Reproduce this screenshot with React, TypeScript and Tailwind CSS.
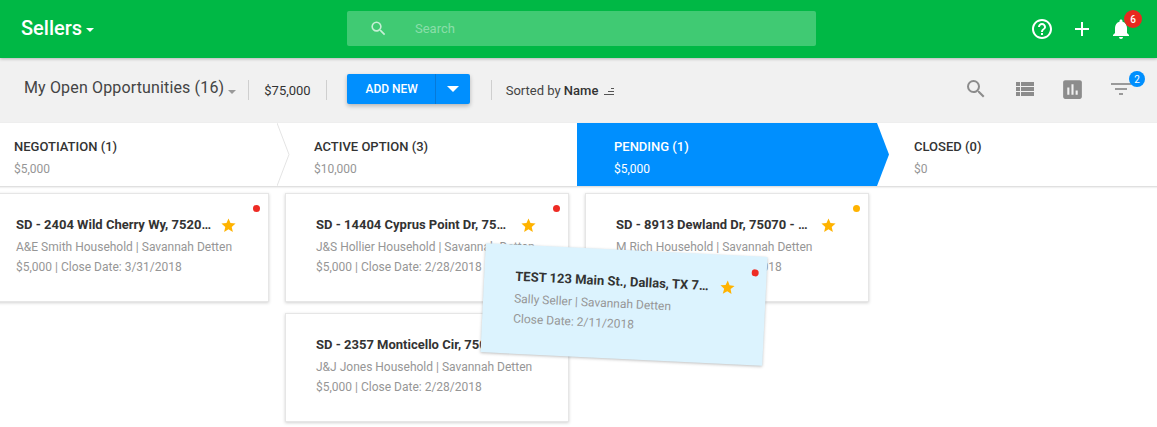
import React from 'react';
import { MdAdd, MdAssessment, MdHelpOutline, MdNotifications, MdSearch, MdStar, MdViewList } from 'react-icons/md';

type Deal = { title: string; line1: string; line2: string; dot: string };

const stages = [
  { name: 'NEGOTIATION (1)', total: '$5,000' },
  { name: 'ACTIVE OPTION (3)', total: '$10,000' },
  { name: 'PENDING (1)', total: '$5,000', active: true },
  { name: 'CLOSED (0)', total: '$0' },
];

const columns: Deal[][] = [
  [{ title: 'SD - 2404 Wild Cherry Wy, 75205 - Sale', line1: 'A&E Smith Household | Savannah Detten', line2: '$5,000 | Close Date: 3/31/2018', dot: 'bg-[#ee2b24]' }],
  [
    { title: 'SD - 14404 Cyprus Point Dr, 75254 - Sale', line1: 'J&S Hollier Household | Savannah Detten', line2: '$5,000 | Close Date: 2/28/2018', dot: 'bg-[#ee2b24]' },
    { title: 'SD - 2357 Monticello Cir, 75070 - Sale', line1: 'J&J Jones Household | Savannah Detten', line2: '$5,000 | Close Date: 2/28/2018', dot: 'bg-[#ee2b24]' },
  ],
  [{ title: 'SD - 8913 Dewland Dr, 75070 - Sale of home', line1: 'M Rich Household | Savannah Detten', line2: '$5,000 | Close Date: 2/28/2018', dot: 'bg-[#ffb300]' }],
];

const Caret = ({ className }: { className: string }) => (
  <span className={`inline-block h-0 w-0 border-x-[4px] border-t-[4px] border-x-transparent ${className}`} />
);

const Separator = () => <div className="mt-[-1px] h-[20px] w-px bg-[#cfcfcf]" />;

const DealCard = ({ deal, dragging }: { deal: Deal; dragging?: boolean }) => (
  <div
    className={
      dragging
        ? 'absolute left-[483px] top-[250px] h-[109px] w-[282px] rotate-[2.8deg] bg-[#dcf3fe] pl-[31px] pt-[23px] shadow-[0_1px_3px_rgba(0,0,0,0.25)]'
        : 'relative h-[109px] w-[284px] border border-[#e6e6e6] bg-white pl-[30px] pt-[22px] shadow-[0_1px_3px_rgba(0,0,0,0.18)]'
    }
  >
    <span className={`absolute right-[8px] h-[7px] w-[7px] rounded-full ${dragging ? 'top-[13px]' : 'top-[11px]'} ${deal.dot}`} />
    <div className="flex items-center">
      <div className="w-[196px] truncate text-[13px] font-bold leading-[18px] text-[#333333]">{deal.title}</div>
      <MdStar size={17} className="ml-[8px] text-[#ffb300]" />
    </div>
    <div className="mt-[3px] whitespace-nowrap text-[12px] leading-[20px] text-[#969696]">{deal.line1}</div>
    <div className="whitespace-nowrap text-[12px] leading-[20px] text-[#969696]">{deal.line2}</div>
  </div>
);

const App: React.FC = () => {
  return (
    <div className="relative h-screen overflow-hidden bg-white font-['Roboto',sans-serif]">
      {/* Top bar */}
      <header className="relative z-20 flex h-[58px] items-center bg-[#00b845] shadow-[0_1px_3px_rgba(0,0,0,0.25)]">
        <div className="mt-[-2px] flex w-[347px] items-center pl-[21px]">
          <span className="text-[20px] font-medium text-white">Sellers</span>
          <Caret className="ml-[4px] mt-[3px] border-t-white" />
        </div>
        <div className="mt-[-1px] flex h-[35px] w-[469px] items-center rounded-[2px] bg-white/25 pl-[22px]">
          <MdSearch size={19} className="text-white/70" />
          <span className="ml-[27px] text-[13px] text-white/40">Search</span>
        </div>
        <div className="ml-auto flex items-center pr-[24px] text-white">
          <MdHelpOutline size={24} />
          <MdAdd size={24} className="ml-[16px]" />
          <div className="relative ml-[15px] h-[24px] w-[24px]">
            <MdNotifications size={24} />
            <span className="absolute left-[15px] top-[-7px] flex h-[18px] w-[18px] items-center justify-center rounded-full bg-[#e8291f] text-[10px] font-medium text-white">6</span>
          </div>
        </div>
      </header>

      {/* Toolbar */}
      <div className="flex h-[65px] items-center bg-[#f1f1f1] pl-[24px]">
        <span className="mt-[-5px] text-[16px] tracking-[0.15px] text-[#444444]">My Open Opportunities (16)</span>
        <Caret className="ml-[4px] mt-[2px] border-t-[#999999]" />
        <div className="ml-[12px]"><Separator /></div>
        <span className="ml-[15px] text-[13px] text-[#333333]">$75,000</span>
        <div className="ml-[15px]"><Separator /></div>
        <div className="ml-[20px] mt-[-3px] flex h-[30px] w-[123px] rounded-[2px] bg-[#008ffe] text-white shadow-[0_2px_4px_rgba(0,0,0,0.25)]">
          <div className="flex w-[89px] items-center justify-center border-r border-[#0679d8] pl-[2px] text-[12px] font-medium">ADD NEW</div>
          <div className="flex flex-1 items-center justify-center">
            <span className="inline-block h-0 w-0 border-x-[6px] border-t-[6px] border-x-transparent border-t-white" />
          </div>
        </div>
        <div className="ml-[21px]"><Separator /></div>
        <span className="ml-[14px] mt-[1px] text-[13px] text-[#444444]">Sorted by <span className="font-medium text-[#333333]">Name</span></span>
        <svg className="ml-[6px] mt-[3px]" width="10" height="8" viewBox="0 0 10 8" fill="#555555">
          <rect x="7" y="0" width="3" height="1" />
          <rect x="4" y="3" width="6" height="1" />
          <rect x="0" y="6" width="10" height="1" />
        </svg>
        <div className="ml-auto mt-[-3px] flex items-center pr-[24px] text-[#8c8c8c]">
          <MdSearch size={24} />
          <MdViewList size={24} className="ml-[25px]" />
          <MdAssessment size={25} className="ml-[23px]" />
          <div className="relative ml-[24px] h-[24px] w-[24px]">
            <svg width="24" height="24" viewBox="0 0 24 24" fill="#9a9a9a">
              <rect x="2" y="6" width="20" height="2" />
              <rect x="6" y="11" width="12" height="2" />
              <rect x="10" y="16" width="4" height="2" />
            </svg>
            <span className="absolute left-[20px] top-[-6px] flex h-[16px] w-[16px] items-center justify-center rounded-full bg-[#008ffe] text-[10px] text-white">2</span>
          </div>
        </div>
      </div>

      {/* Pipeline stages */}
      <div className="relative z-10 ml-[-23px] flex h-[63px] w-[1200px] bg-white shadow-[0_1px_2px_rgba(0,0,0,0.18)]">
        {stages.map((stage, i) => (
          <div
            key={stage.name}
            className={`relative h-full w-[300px] pl-[37px] pt-[14px] ${stage.active ? 'bg-[#008ffe]' : ''}`}
          >
            <div className={`mt-[1px] text-[13px] font-medium leading-[18px] ${stage.active ? 'text-white' : 'text-[#333333]'}`}>{stage.name}</div>
            <div className={`mt-[4px] text-[12px] leading-[18px] ${stage.active ? 'text-white' : 'text-[#969696]'}`}>{stage.total}</div>
            {i < stages.length - 1 && (
              <svg className="absolute left-full top-0 z-10" width="13" height="63" viewBox="0 0 13 63">
                {stage.active ? (
                  <polygon points="0,0 12,31.5 0,63" fill="#008ffe" />
                ) : (
                  <polyline points="0,0 12,31.5 0,63" fill="none" stroke={i === 1 ? 'none' : '#e4e4e4'} />
                )}
              </svg>
            )}
          </div>
        ))}
      </div>

      {/* Deal columns */}
      <div className="ml-[-15px] mt-[7px] flex gap-[16px]">
        {columns.map((col, i) => (
          <div key={i} className="flex flex-col gap-[11px]">
            {col.map((deal) => (
              <DealCard key={deal.title} deal={deal} />
            ))}
          </div>
        ))}
      </div>

      <DealCard
        dragging
        deal={{ title: 'TEST 123 Main St., Dallas, TX 75201 - Sale', line1: 'Sally Seller | Savannah Detten', line2: 'Close Date: 2/11/2018', dot: 'bg-[#ee2b24]' }}
      />
    </div>
  );
};

export default App;
